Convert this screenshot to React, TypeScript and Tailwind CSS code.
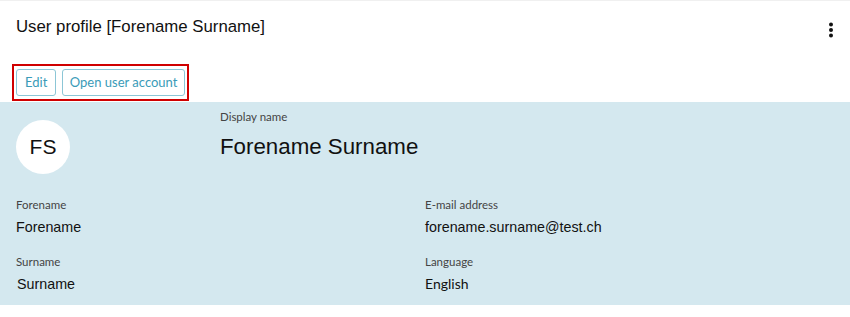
const arial = "font-['Liberation_Sans',Arial,sans-serif]";
const lato = "font-['Lato',sans-serif]";

function Field({ label, value, valueFont, valueSize = "text-[14.3px]", className = "" }: { label: string; value: string; valueFont: string; valueSize?: string; className?: string }) {
  return (
    <div className={className}>
      <div className={`${lato} text-[11.5px] leading-[14px] text-[#444]`}>{label}</div>
      <div className={`${valueFont} ${valueSize} mt-[6px] leading-[18px] text-[#111]`}>{value}</div>
    </div>
  );
}

export default function App() {
  return (
    <div className="w-[850px] h-[317px] bg-white border-t border-[#f0f0f0]">
      {/* Header */}
      <div className="flex items-start justify-between pl-4 pr-[16px] pt-[15px]">
        <h1 className={`${arial} text-[16.8px] leading-[22px] text-[#111]`}>User profile [Forename Surname]</h1>
        <svg width="6" height="16" viewBox="0 0 6 16" className="mt-[6px]">
          <circle cx="3" cy="2.5" r="2" fill="#111" />
          <circle cx="3" cy="8" r="2" fill="#111" />
          <circle cx="3" cy="13.5" r="2" fill="#111" />
        </svg>
      </div>

      {/* Actions */}
      <div className="pl-3 mt-[26px]">
        <div className="inline-flex gap-[6px] border-2 border-[#d00000] px-[2px] py-[3px]">
          <button className={`${lato} h-[27px] px-[8px] text-[13px] text-[#3a9bb8] border border-[#8cc6d6] rounded-[3px] bg-white`}>Edit</button>
          <button className={`${lato} h-[27px] px-[6.5px] text-[13px] text-[#3a9bb8] border border-[#8cc6d6] rounded-[3px] bg-white`}>Open user account</button>
        </div>
      </div>

      {/* Details */}
      <div className="mt-[1px] h-[203px] bg-[#d4e8ef] px-4 pt-[8px]">
        <div className="flex">
          <div className="w-[204px] pt-[10px]">
            <div className={`${arial} w-[54px] h-[54px] rounded-full bg-white flex items-center justify-center text-[21px] text-[#111]`}>FS</div>
          </div>
          <div>
            <div className={`${lato} text-[11.5px] leading-[14px] text-[#444]`}>Display name</div>
            <div className={`${arial} mt-[9px] text-[22.3px] leading-[28px] text-[#111]`}>Forename Surname</div>
          </div>
        </div>
        <div className="grid grid-cols-[409px_1fr] gap-y-[19px] mt-[24px]">
          <Field label="Forename" value="Forename" valueFont={arial} />
          <Field label="E-mail address" value="forename.surname@test.ch" valueFont={arial} />
          <Field label="Surname" value="Surname" valueFont={arial} className="[&>div:last-child]:pl-px" />
          <Field label="Language" value="English" valueFont={lato} valueSize="text-[14px]" />
        </div>
      </div>
    </div>
  );
}
